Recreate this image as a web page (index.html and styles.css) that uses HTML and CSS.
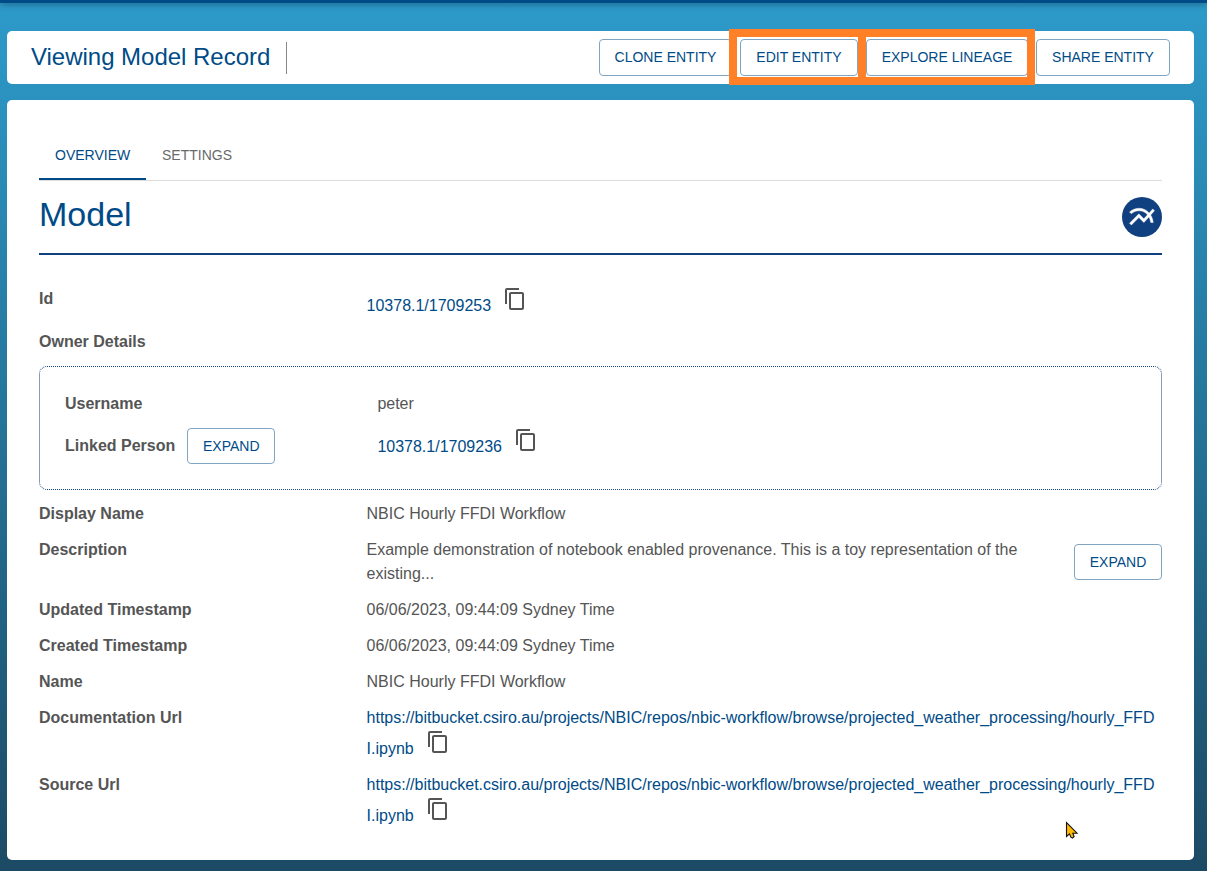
FILE: index.html
```html
<!DOCTYPE html>
<html lang="en">
<head>
<meta charset="utf-8">
<title>Viewing Model Record</title>
<link rel="stylesheet" href="styles.css">
</head>
<body>
<svg class="defs" width="0" height="0">
  <symbol id="copy" viewBox="0 0 24 24"><path d="M16 1H4c-1.1 0-2 .9-2 2v14h2V3h12V1zm3 4H8c-1.1 0-2 .9-2 2v14c0 1.1.9 2 2 2h11c1.1 0 2-.9 2-2V7c0-1.1-.9-2-2-2zm0 16H8V7h11v14z"/></symbol>
</svg>
<div class="topbar"></div>
<main class="page">
  <header class="card header">
    <h1 class="title">Viewing Model Record</h1>
    <div class="actions">
      <button class="btn w-clone">CLONE ENTITY</button>
      <button class="btn w-edit">EDIT ENTITY</button>
      <button class="btn w-explore">EXPLORE LINEAGE</button>
      <button class="btn w-share">SHARE ENTITY</button>
    </div>
    <div class="highlight highlight-edit"></div>
    <div class="highlight highlight-explore"></div>
  </header>
  <section class="card content">
    <nav class="tabs">
      <a class="tab active">OVERVIEW</a>
      <a class="tab">SETTINGS</a>
    </nav>
    <div class="heading">
      <h2 class="name">Model</h2>
      <span class="badge"><svg width="30" height="30" viewBox="0 0 24 24"><path d="M22 6.92l-1.41-1.41-2.85 3.21C15.68 6.4 12.83 5 9.61 5 6.72 5 4.07 6.16 2 8l1.42 1.42C5.12 7.93 7.27 7 9.61 7c2.74 0 5.09 1.26 6.77 3.24l-2.88 3.24-4-4L2 16.99l1.5 1.5 6-6.01 4 4 4.05-4.55c.75 1.35 1.25 2.9 1.44 4.55H21c-.22-2.3-.95-4.39-2.04-6.14L22 6.92z"/></svg></span>
    </div>
    <div class="rows">
      <div class="row id-row">
        <div class="label">Id</div>
        <div class="value"><span class="line handle"><a class="link">10378.1/1709253</a><svg class="copy"><use href="#copy"/></svg></span></div>
      </div>
      <div class="row"><div class="label">Owner Details</div></div>
      <div class="owner">
        <div class="row">
          <div class="label">Username</div>
          <div class="value">peter</div>
        </div>
        <div class="row person">
          <div class="label with-btn">Linked Person<button class="btn small">EXPAND</button></div>
          <div class="value"><span class="line handle"><a class="link">10378.1/1709236</a><svg class="copy"><use href="#copy"/></svg></span></div>
        </div>
      </div>
      <div class="row"><div class="label">Display Name</div><div class="value">NBIC Hourly FFDI Workflow</div></div>
      <div class="row">
        <div class="label">Description</div>
        <div class="value">Example demonstration of notebook enabled provenance. This is a toy representation of the<br>existing...</div>
        <button class="btn small end">EXPAND</button>
      </div>
      <div class="row"><div class="label">Updated Timestamp</div><div class="value">06/06/2023, 09:44:09 Sydney Time</div></div>
      <div class="row"><div class="label">Created Timestamp</div><div class="value">06/06/2023, 09:44:09 Sydney Time</div></div>
      <div class="row"><div class="label">Name</div><div class="value">NBIC Hourly FFDI Workflow</div></div>
      <div class="row">
        <div class="label">Documentation Url</div>
        <div class="value"><a class="link url">https://bitbucket.csiro.au/projects/NBIC/repos/nbic-workflow/browse/projected_weather_processing/hourly_FFD</a><span class="line tail"><a class="link">I.ipynb</a><svg class="copy"><use href="#copy"/></svg></span></div>
      </div>
      <div class="row">
        <div class="label">Source Url</div>
        <div class="value"><a class="link url">https://bitbucket.csiro.au/projects/NBIC/repos/nbic-workflow/browse/projected_weather_processing/hourly_FFD</a><span class="line tail"><a class="link">I.ipynb</a><svg class="copy"><use href="#copy"/></svg></span></div>
      </div>
    </div>
  </section>
</main>
<svg class="cursor" width="14" height="20" viewBox="0 0 14 20"><path d="M1.5 1.5v14l3-2.6 1.4 3.2 1.6 1 1.6-1.6-1.3-3.3h4.2z" fill="#ffb900" stroke="#111" stroke-width="1.1"/></svg>
</body>
</html>
```
FILE: styles.css
```css
* { box-sizing: border-box; }
body {
  margin: 0;
  height: 871px;
  overflow: hidden;
  font-family: "Liberation Sans", Arial, sans-serif;
  font-size: 16px;
  line-height: 24px;
  letter-spacing: 0;
  color: #555;
  background: linear-gradient(180deg, #2d9aca 0%, #2c96c4 6%, #1c4a64 100%);
}
.defs { position: absolute; }
.topbar { height: 3px; background: #004b87; box-shadow: 0 1px 6px rgba(0, 0, 0, 0.5); }
.page { padding: 28px 13px 0 7px; }
.card { background: #fff; border-radius: 5px; }

.header {
  position: relative;
  display: flex;
  align-items: center;
  justify-content: space-between;
  height: 53px;
  padding: 0 24px;
  margin-bottom: 16px;
}
.title {
  margin: 0;
  height: 32px;
  padding-right: 16px;
  border-right: 1px solid #888;
  font-size: 24px;
  font-weight: 400;
  line-height: 29px;
  letter-spacing: -0.02px;
  color: #004b87;
}
.actions { display: flex; gap: 8px; }
.btn {
  height: 37px;
  padding: 0 0 2px;
  border: 1px solid #7fa5c3;
  border-radius: 4px;
  background: #fff;
  font-family: inherit;
  font-size: 14px;
  line-height: 24px;
  letter-spacing: 0;
  color: #004b87;
  white-space: nowrap;
}
.w-clone { width: 133px; }
.w-edit { width: 118px; }
.w-explore { width: 162px; }
.w-share { width: 134px; }
.highlight { position: absolute; top: -2px; height: 56px; border: 8px solid #ff8026; }
.highlight-edit { left: 722px; width: 137px; }
.highlight-explore { left: 851px; width: 177px; }

.content { height: 760px; padding: 32px; }
.tabs { display: flex; height: 49px; border-bottom: 1px solid #ddd; }
.tab {
  height: 48px;
  padding: 11px 16px 0;
  font-size: 14px;
  color: #6a6a6a;
}
.tab.active { width: 107px; color: #004b87; border-bottom: 2px solid #004b87; }
.heading {
  display: flex;
  justify-content: space-between;
  height: 74px;
  padding-top: 12px;
  border-bottom: 2px solid #10407f;
}
.name { margin: 0; font-size: 34px; font-weight: 400; line-height: 42px; color: #004b87; }
.badge {
  display: flex;
  align-items: center;
  justify-content: center;
  width: 40px;
  height: 40px;
  margin-top: 4px;
  border-radius: 50%;
  background: #10407f;
}
.badge svg { fill: #fff; stroke: #fff; stroke-width: 0.3; }

.rows { padding-top: 26px; }
.row { display: flex; padding: 6px 0; }
.label { flex: 0 0 29.1667%; font-weight: 700; }
.value { white-space: nowrap; }
.id-row { height: 43px; }
.link { color: #004b87; }
.url { display: block; }
.line { display: flex; }
.handle .link { padding-top: 7px; }
.copy { width: 24px; height: 24px; margin: 0 0 0 12px; fill: #555; }
.owner { margin: 6px 0; padding: 19px 25px; border: 1px dotted #10407f; border-radius: 8px; }
.person { height: 48px; }
.with-btn { display: flex; height: 30px; padding-top: 6px; }
.small { width: 88px; height: 36px; padding-bottom: 0; }
.with-btn .small { margin: -6px 0 0 12px; font-weight: 400; }
.end { margin: 6px 0 0 auto; }
.tail { height: 31px; }
.tail .link { padding-top: 7px; }

.cursor { position: absolute; left: 1065px; top: 821px; }
```
